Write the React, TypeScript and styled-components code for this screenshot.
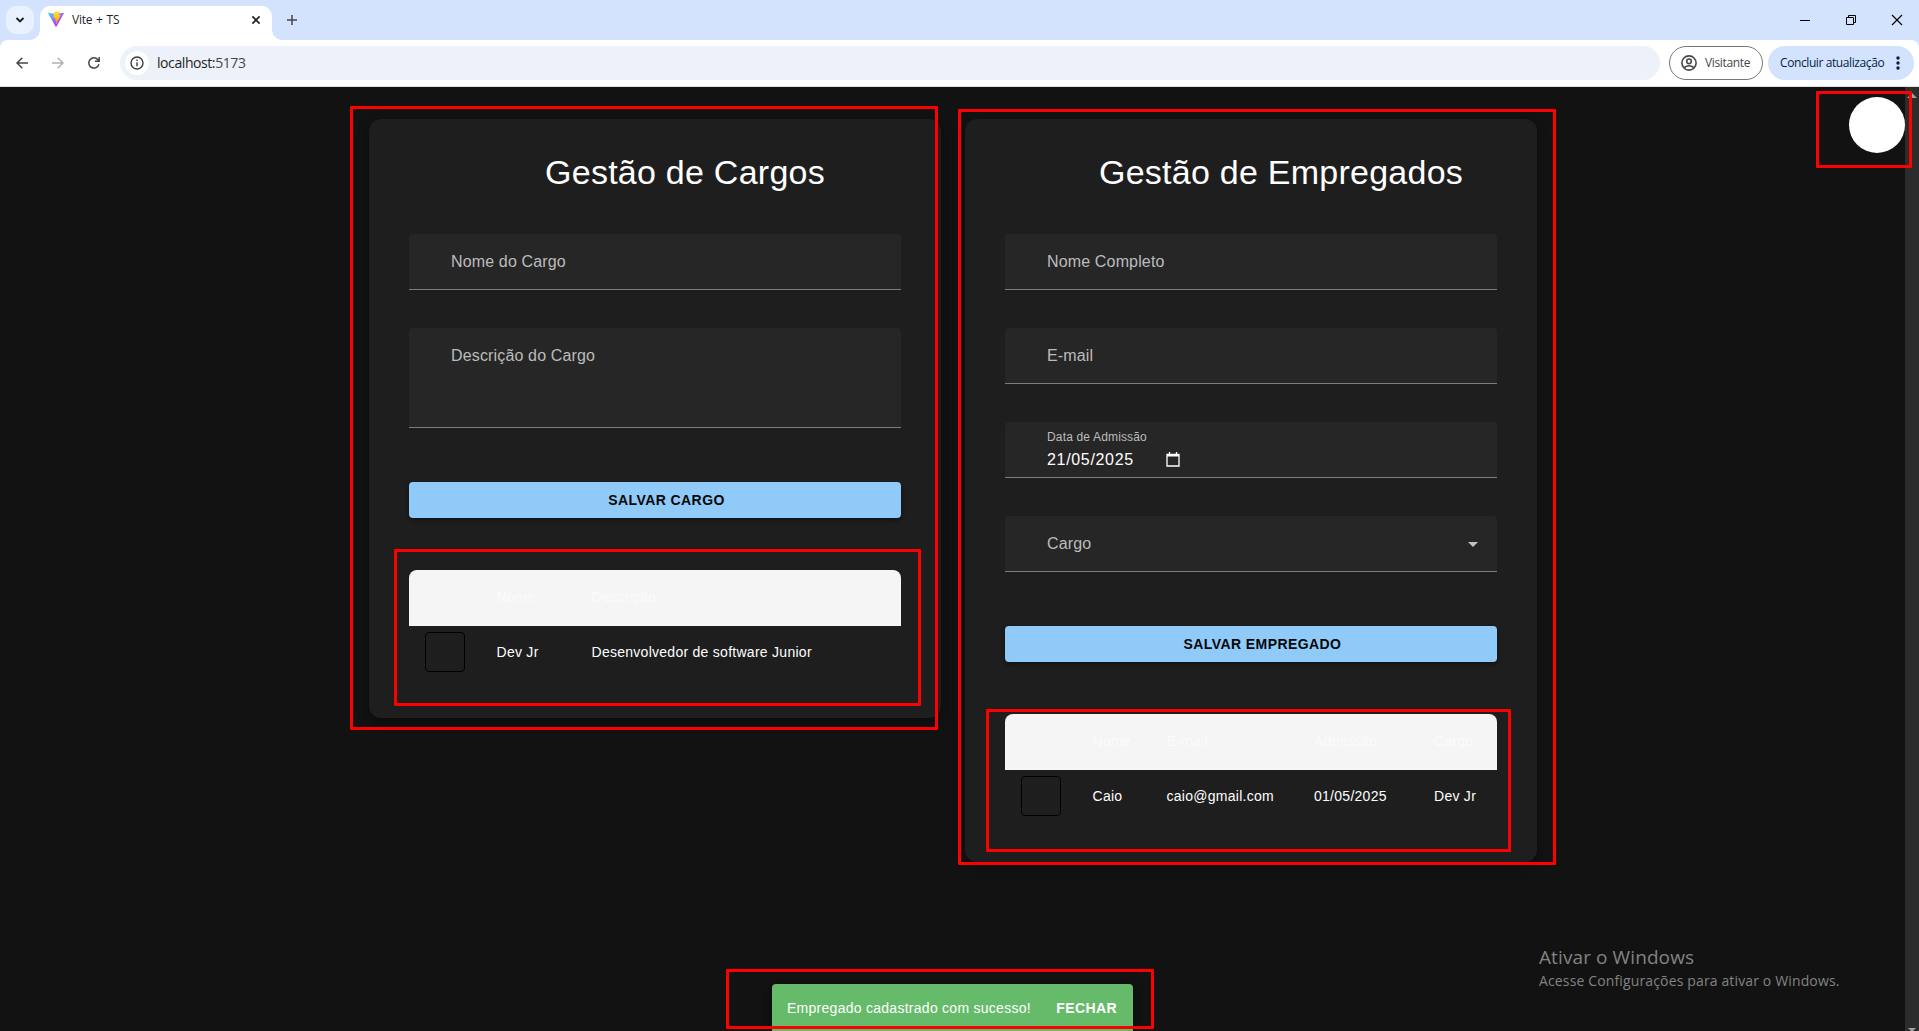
import React from 'react';
import styled, { createGlobalStyle } from 'styled-components';

const arial = '"Liberation Sans", Arial, sans-serif';
const segoe = '"Open Sans", "Segoe UI", sans-serif';

const GlobalStyle = createGlobalStyle`
  * { box-sizing: border-box; }
  html, body { margin: 0; padding: 0; background: #121212; overflow: hidden; }
  svg { display: block; flex: none; }
`;

const Screen = styled.div`
  position: relative;
  width: 1919px;
  height: 1031px;
  overflow: hidden;
  display: flex;
  flex-direction: column;
  background: #121212;
  font-family: ${arial};
`;

/* ---------- browser chrome ---------- */

const TabStrip = styled.div`
  height: 40px;
  flex: none;
  display: flex;
  background: #d3e3fd;
  padding: 6px 0 0 6px;
`;

const TabSearch = styled.div`
  width: 28px;
  height: 28px;
  border-radius: 10px;
  background: #e9f0fe;
  display: flex;
  align-items: center;
  justify-content: center;
  margin-right: 6px;
`;

const Tab = styled.div`
  position: relative;
  width: 232px;
  height: 34px;
  border-radius: 10px 10px 0 0;
  background: #fff;
  display: flex;
  align-items: flex-start;
  padding: 5px 9px 0 8px;
  &::before, &::after {
    content: '';
    position: absolute;
    bottom: 0;
    width: 10px;
    height: 10px;
  }
  &::before { left: -10px; background: radial-gradient(circle at 0 0, transparent 9.5px, #fff 10px); }
  &::after { right: -10px; background: radial-gradient(circle at 100% 0, transparent 9.5px, #fff 10px); }
`;

const TabTitle = styled.span`
  flex: 1;
  margin-left: 8px;
  font: 12px/18px ${segoe};
  letter-spacing: -0.25px;
  word-spacing: 1px;
  color: #1f1f1f;
`;

const NewTab = styled.div`
  padding: 9px 0 0 15px;
  flex: 1;
`;

const WindowButtons = styled.div`
  display: flex;
  gap: 34px;
  padding: 8px 16px 0 0;
`;

const ToolbarBack = styled.div`
  background: #d3e3fd;
  flex: none;
`;

const Toolbar = styled.div`
  height: 47px;
  display: flex;
  align-items: center;
  background: #fff;
  border-bottom: 1px solid #dfe1e5;
  border-radius: 8px 8px 0 0;
  padding: 0 5px 0 16px;
`;

const NavIcons = styled.div`
  display: flex;
  gap: 24px;
  width: 104px;
`;

const Omnibox = styled.div`
  width: 1540px;
  height: 34px;
  border-radius: 17px;
  background: #edf1fa;
  display: flex;
  align-items: center;
  padding-left: 5px;
`;

const SiteInfo = styled.div`
  width: 24px;
  height: 24px;
  border-radius: 50%;
  background: #fff;
  display: flex;
  align-items: center;
  justify-content: center;
  margin-right: 8px;
`;

const Url = styled.span`
  font: 14px/20px ${segoe};
  letter-spacing: -0.42px;
  color: #1f1f1f;
  span { color: #474747; }
`;

const GuestChip = styled.div`
  width: 94px;
  height: 34px;
  margin-left: 9px;
  border: 1px solid #747775;
  border-radius: 17px;
  display: flex;
  align-items: center;
  gap: 8px;
  padding-left: 11px;
  font: 12px/18px ${segoe};
  letter-spacing: -0.35px;
  color: #474747;
`;

const UpdateChip = styled.div`
  width: 146px;
  height: 34px;
  margin-left: 5px;
  border-radius: 17px;
  background: #d3e3fd;
  display: flex;
  align-items: center;
  justify-content: space-between;
  padding: 0 14px 0 12px;
  font: 12px/18px ${segoe};
  letter-spacing: -0.4px;
  white-space: nowrap;
  color: #041e49;
`;

/* ---------- page ---------- */

const Viewport = styled.div`
  flex: 1;
  display: flex;
  min-height: 0;
`;

const Page = styled.main`
  flex: 1;
  display: flex;
  justify-content: center;
  align-items: flex-start;
  gap: 24px;
  padding-top: 32px;
`;

const Scrollbar = styled.div`
  width: 14px;
  background: #2c2c2c;
  display: flex;
  flex-direction: column;
  justify-content: space-between;
  align-items: center;
  padding-top: 6px;
`;

const Card = styled.section`
  width: 572px;
  padding: 32px 40px 40px;
  border-radius: 12px;
  background: #1e1e1e;
  box-shadow: 0 4px 12px rgba(0, 0, 0, 0.4);
  display: flex;
  flex-direction: column;
`;

const Title = styled.h1`
  margin: 0 0 41px;
  padding-left: 61px;
  text-align: center;
  font: 400 34px/42px ${arial};
  letter-spacing: 0.25px;
  color: #fff;
`;

const Fields = styled.div`
  display: flex;
  flex-direction: column;
  gap: 38px;
`;

const Field = styled.div<{ $tall?: boolean }>`
  height: ${(p) => (p.$tall ? 100 : 56)}px;
  padding: 16px 18px 0 42.5px;
  display: flex;
  justify-content: space-between;
  align-items: flex-start;
  background: #262626;
  border-bottom: 1px solid #7c7c7c;
  border-radius: 4px 4px 0 0;
  font-size: 16px;
  line-height: 23px;
  letter-spacing: 0.15px;
  color: #bcbcbc;
`;

const DateField = styled(Field)`
  flex-direction: column;
  justify-content: flex-start;
  padding-top: 7px;
`;

const SmallLabel = styled.span`
  font-size: 12px;
  line-height: 17px;
  letter-spacing: 0.16px;
`;

const DateValue = styled.div`
  display: flex;
  align-items: center;
  gap: 32px;
  margin-top: 2px;
  letter-spacing: 0.67px;
  color: #fff;
`;

const SaveButton = styled.button`
  height: 36px;
  margin: 54px 0 52px;
  padding: 0 0 0 24px;
  border: 0;
  border-radius: 4px;
  background: #90caf9;
  box-shadow: 0 2px 5px rgba(0, 0, 0, 0.45);
  font: 700 14px/24px ${arial};
  letter-spacing: 0.42px;
  color: #060809;
`;

const Table = styled.div<{ $cols: string }>`
  display: grid;
  grid-template-columns: ${(p) => p.$cols};
  grid-template-rows: 56px 52px;
  border-radius: 8px;
  overflow: hidden;
  font-size: 14px;
  letter-spacing: 0.27px;
  white-space: nowrap;
`;

const HeadCell = styled.div`
  background: #f5f5f5;
  color: #fbfbfb;
  display: flex;
  align-items: center;
  padding-bottom: 2px;
`;

const Cell = styled.div`
  color: #fff;
  display: flex;
  align-items: center;
`;

const RowAction = styled.div`
  width: 40px;
  height: 40px;
  margin-left: 16px;
  border: 1px solid #000;
  border-radius: 4px;
`;

/* ---------- floating layer ---------- */

const Fab = styled.div`
  position: absolute;
  left: 1849px;
  top: 97px;
  width: 56px;
  height: 56px;
  border-radius: 50%;
  background: #fff;
`;

const Snackbar = styled.div`
  position: absolute;
  left: 772px;
  top: 984px;
  width: 361px;
  height: 48px;
  border-radius: 4px 4px 0 0;
  background: #66bb6a;
  box-shadow: 0 3px 10px rgba(0, 0, 0, 0.4);
  display: flex;
  align-items: center;
  justify-content: space-between;
  padding: 0 16px 0 15px;
  font-size: 14px;
  letter-spacing: 0.27px;
  color: #fff;
`;

const CloseLabel = styled.span`
  font-weight: 700;
  letter-spacing: 0.4px;
`;

const Watermark = styled.div`
  position: absolute;
  left: 1539px;
  top: 944px;
  font-family: ${segoe};
  color: #838383;
  white-space: nowrap;
`;

const WatermarkTitle = styled.div`
  font-size: 19px;
  line-height: 27px;
  letter-spacing: 0.1px;
`;

const WatermarkText = styled.div`
  font-size: 14px;
  line-height: 19px;
  letter-spacing: 0.14px;
`;

const Marker = styled.div<{ $x: number; $y: number; $w: number; $h: number }>`
  position: absolute;
  left: ${(p) => p.$x}px;
  top: ${(p) => p.$y}px;
  width: ${(p) => p.$w}px;
  height: ${(p) => p.$h}px;
  border: 3px solid #f00;
  border-radius: 1px;
`;

const markers = [
  [350, 106, 588, 624],
  [394, 549, 527, 157],
  [958, 109, 598, 756],
  [986, 709, 525, 143],
  [1816, 91, 96, 77],
  [726, 969, 428, 60],
];

const ViteLogo = () => (
  <svg width="16" height="16" viewBox="0 0 256 257">
    <defs>
      <linearGradient id="shield" x1="-.8%" x2="57.6%" y1="7.6%" y2="78.4%">
        <stop offset="0%" stopColor="#41D1FF" />
        <stop offset="100%" stopColor="#BD34FE" />
      </linearGradient>
      <linearGradient id="bolt" x1="43.4%" x2="50.3%" y1="2.2%" y2="89%">
        <stop offset="0%" stopColor="#FFEA83" />
        <stop offset="8.3%" stopColor="#FFDD35" />
        <stop offset="100%" stopColor="#FFA800" />
      </linearGradient>
    </defs>
    <path fill="url(#shield)" d="M255.153 37.938 134.897 252.976c-2.483 4.44-8.862 4.466-11.382.048L.875 37.958c-2.746-4.814 1.371-10.646 6.827-9.67l120.385 21.517a6.537 6.537 0 0 0 2.322-.004l117.867-21.483c5.438-.991 9.574 4.796 6.877 9.62Z" />
    <path fill="url(#bolt)" d="M185.432.063 96.44 17.501a3.268 3.268 0 0 0-2.634 3.014l-5.474 92.456a3.268 3.268 0 0 0 3.997 3.378l24.777-5.718c2.318-.535 4.413 1.507 3.936 3.838l-7.361 36.047c-.495 2.426 1.782 4.5 4.151 3.78l15.304-4.649c2.372-.72 4.652 1.36 4.15 3.788l-11.698 56.621c-.732 3.542 3.979 5.473 5.943 2.437l1.313-2.028 72.516-144.72c1.215-2.423-.88-5.186-3.54-4.672l-25.505 4.922c-2.396.462-4.435-1.77-3.759-4.114l16.646-57.705c.677-2.35-1.37-4.583-3.769-4.113Z" />
  </svg>
);

export default function App() {
  return (
    <Screen>
      <GlobalStyle />
      <TabStrip>
        <TabSearch>
          <svg width="10" height="8" viewBox="0 0 10 8" fill="none" stroke="#1f1f1f" strokeWidth="1.9">
            <path d="M1.5 2 5 5.500 8.500 2" />
          </svg>
        </TabSearch>
        <Tab>
          <ViteLogo />
          <TabTitle>Vite + TS</TabTitle>
          <svg width="14" height="18" viewBox="0 0 14 18" fill="none" stroke="#1f1f1f" strokeWidth="1.6">
            <path d="m3.4 5.4 7.2 7.2m0-7.2-7.2 7.2" />
          </svg>
        </Tab>
        <NewTab>
          <svg width="10" height="10" viewBox="0 0 10 10" stroke="#474747" strokeWidth="1.5">
            <path d="M5 0v10M0 5h10" />
          </svg>
        </NewTab>
        <WindowButtons>
          <svg width="12" height="12" viewBox="0 0 12 12" stroke="#000">
            <path d="M1 6.5h10" />
          </svg>
          <svg width="12" height="12" viewBox="0 0 12 12" fill="none" stroke="#000">
            <path d="M1.5 3.5h7v7h-7zM3.5 3.500v-2h7v7h-2" />
          </svg>
          <svg width="12" height="12" viewBox="0 0 12 12" stroke="#000" strokeWidth="1.1">
            <path d="m1 1 10 10M11 1 1 11" />
          </svg>
        </WindowButtons>
      </TabStrip>
      <ToolbarBack>
        <Toolbar>
          <NavIcons>
            <svg width="12" height="12" viewBox="0 0 12 12" fill="none" stroke="#474747" strokeWidth="1.5">
              <path d="M12 6H1.200M6.300.7 1 6l5.300 5.300" />
            </svg>
            <svg width="12" height="12" viewBox="0 0 12 12" fill="none" stroke="#b0b0b0" strokeWidth="1.5">
              <path d="M0 6h10.800M5.700.7 11 6l-5.300 5.300" />
            </svg>
            <svg width="12" height="12" viewBox="0 0 12 12" fill="none" stroke="#474747" strokeWidth="1.5">
              <path d="M10.900 7.200A5.100 5.100 0 1 1 9.900 2.700L11 3.900M11.200 0v4.300H6.900" />
            </svg>
          </NavIcons>
          <Omnibox>
            <SiteInfo>
              <svg width="14" height="14" viewBox="0 0 14 14" fill="none" stroke="#3c3c3c" strokeWidth="1.4">
                <circle cx="7" cy="7" r="6" />
                <path d="M7 6.200v4M7 3.600v1.500" />
              </svg>
            </SiteInfo>
            <Url>localhost:<span>5173</span></Url>
          </Omnibox>
          <GuestChip>
            <svg width="16" height="16" viewBox="0 0 16 16" fill="none" stroke="#474747" strokeWidth="1.6">
              <circle cx="8" cy="8" r="7.100" />
              <circle cx="8" cy="6.300" r="2.300" />
              <path d="M3.200 12.600c2.700-2.500 6.900-2.500 9.600 0" />
            </svg>
            Visitante
          </GuestChip>
          <UpdateChip>
            Concluir atualização
            <svg width="4" height="14" viewBox="0 0 4 14" fill="#041e49">
              <circle cx="2" cy="2" r="1.700" />
              <circle cx="2" cy="7" r="1.700" />
              <circle cx="2" cy="12" r="1.700" />
            </svg>
          </UpdateChip>
        </Toolbar>
      </ToolbarBack>

      <Viewport>
        <Page>
          <Card>
            <Title>Gestão de Cargos</Title>
            <Fields>
              <Field>Nome do Cargo</Field>
              <Field $tall>Descrição do Cargo</Field>
            </Fields>
            <SaveButton>SALVAR CARGO</SaveButton>
            <Table $cols="88px 95px 1fr">
              <HeadCell />
              <HeadCell>Nome</HeadCell>
              <HeadCell>Descrição</HeadCell>
              <Cell><RowAction /></Cell>
              <Cell>Dev Jr</Cell>
              <Cell>Desenvolvedor de software Junior</Cell>
            </Table>
          </Card>
          <Card>
            <Title>Gestão de Empregados</Title>
            <Fields>
              <Field>Nome Completo</Field>
              <Field>E-mail</Field>
              <DateField>
                <SmallLabel>Data de Admissão</SmallLabel>
                <DateValue>
                  21/05/2025
                  <svg width="14" height="15" viewBox="0 0 14 15" fill="none" stroke="#fff" strokeWidth="1.300">
                    <path d="M1 2.500h12v11.500H1zM3.500 0v2M10.500 0v2" />
                    <path d="M1 3.300h12" strokeWidth="2.400" />
                  </svg>
                </DateValue>
              </DateField>
              <Field>
                Cargo
                <svg width="12" height="24" viewBox="0 0 12 24" fill="#c4c4c4">
                  <path d="M1 10h10l-5 5z" />
                </svg>
              </Field>
            </Fields>
            <SaveButton>SALVAR EMPREGADO</SaveButton>
            <Table $cols="88px 74px 147.5px 120px 1fr">
              <HeadCell />
              <HeadCell>Nome</HeadCell>
              <HeadCell>E-mail</HeadCell>
              <HeadCell>Admissão</HeadCell>
              <HeadCell>Cargo</HeadCell>
              <Cell><RowAction /></Cell>
              <Cell>Caio</Cell>
              <Cell>caio@gmail.com</Cell>
              <Cell>01/05/2025</Cell>
              <Cell>Dev Jr</Cell>
            </Table>
          </Card>
        </Page>
        <Scrollbar>
          <svg width="10" height="5" viewBox="0 0 10 5" fill="#9f9f9f"><path d="M0 5 5 0l5 5z" /></svg>
          <svg width="8" height="3" viewBox="0 0 8 3" fill="#9f9f9f"><path d="M0 0h8L5 3H3z" /></svg>
        </Scrollbar>
      </Viewport>

      <Fab />
      <Snackbar>
        <span>Empregado cadastrado com sucesso!</span>
        <CloseLabel>FECHAR</CloseLabel>
      </Snackbar>
      <Watermark>
        <WatermarkTitle>Ativar o Windows</WatermarkTitle>
        <WatermarkText>Acesse Configurações para ativar o Windows.</WatermarkText>
      </Watermark>
      {markers.map(([x, y, w, h]) => (
        <Marker key={`${x}-${y}`} $x={x} $y={y} $w={w} $h={h} />
      ))}
    </Screen>
  );
}
